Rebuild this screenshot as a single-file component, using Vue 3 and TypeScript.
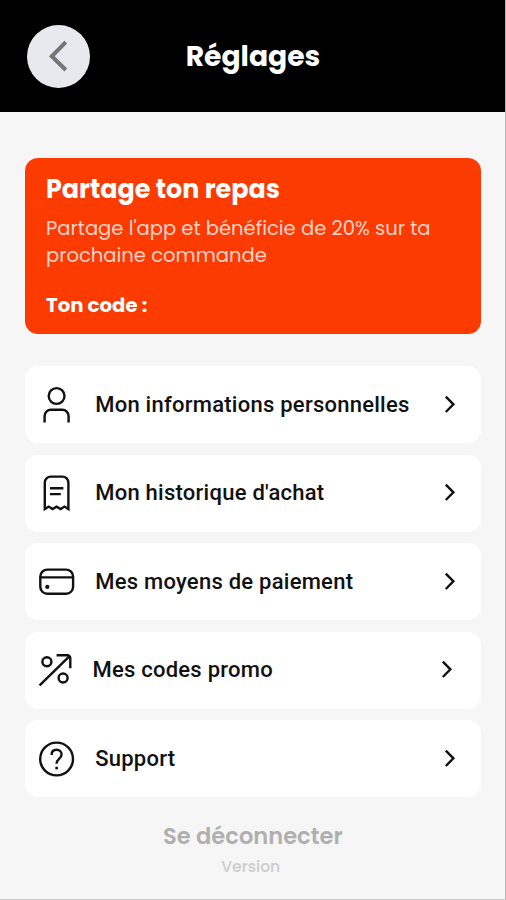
<script setup lang="ts">
type IconName = 'person' | 'receipt' | 'card' | 'promo' | 'help'

interface MenuItem {
  icon: IconName
  label: string
}

const items: MenuItem[] = [
  { icon: 'person', label: 'Mon informations personnelles' },
  { icon: 'receipt', label: "Mon historique d'achat" },
  { icon: 'card', label: 'Mes moyens de paiement' },
  { icon: 'promo', label: 'Mes codes promo' },
  { icon: 'help', label: 'Support' },
]
</script>

<template>
  <div class="screen">
    <header class="header">
      <button class="back" type="button" aria-label="Retour">
        <svg width="63" height="63" viewBox="0 0 63 63">
          <path d="M38.8 17.2 24.8 31.3 38.8 45" />
        </svg>
      </button>
      <h1 class="title">Réglages</h1>
    </header>

    <main class="content">
      <section class="share">
        <h2 class="share-title">Partage ton repas</h2>
        <p class="share-text">
          Partage l'app et bénéficie de 20% sur ta<br />
          prochaine commande
        </p>
        <p class="share-code">Ton code :</p>
      </section>

      <nav class="menu">
        <a v-for="item in items" :key="item.icon" class="item" :class="item.icon">
          <svg class="icon" width="40" height="40" viewBox="-0.6 0 40 40">
            <g v-if="item.icon === 'person'">
              <circle cx="20" cy="11" r="7.9" />
              <path d="M8 37.5V31a6.3 6.3 0 0 1 6.3-6.3h11.4A6.3 6.3 0 0 1 32 31v6.5" />
            </g>
            <g v-else-if="item.icon === 'receipt'">
              <path d="M8.2 36V9.6a6 6 0 0 1 6-6h11.6a6 6 0 0 1 6 6V36L27.9 33.6 24 36 20 33.6 16 36 12.1 33.6Z" />
              <path d="M13.4 15.3h13.4M13.4 21.1h10.8" />
            </g>
            <g v-else-if="item.icon === 'card'">
              <rect x="3.7" y="7.6" width="32.8" height="24.2" rx="7" />
              <path d="M3.7 15.4h32.8" />
              <circle class="dot" cx="10.7" cy="24.9" r="2.1" />
            </g>
            <g v-else-if="item.icon === 'promo'">
              <circle cx="11.3" cy="11.8" r="4.5" />
              <circle cx="27.5" cy="28" r="4.5" />
              <path d="M4 35.4 33.7 6.4M21 5.3H31.7a3 3 0 0 1 3 3V18.2" />
            </g>
            <g v-else>
              <circle cx="20" cy="20" r="16.4" />
              <path d="M15 15.9c0-3.3 2.1-5.2 5-5.2s5 2 5 4.7c0 4.3-5 4.2-5 9.3" />
              <circle class="dot" cx="20" cy="29" r="1.5" />
            </g>
          </svg>
          <span class="label">{{ item.label }}</span>
          <svg class="chevron" width="12" height="20" viewBox="0 0 12 20">
            <path d="M1.8 1.6 9.4 9.3 1.8 17" />
          </svg>
        </a>
      </nav>

      <footer class="footer">
        <button class="logout" type="button">Se déconnecter</button>
        <p class="version">Version</p>
      </footer>
    </main>
  </div>
</template>

<style>
body {
  margin: 0;
}
</style>

<style scoped>
.screen {
  box-sizing: border-box;
  width: 506px;
  height: 900px;
  overflow: hidden;
  background: #f6f6f6;
  border-right: 1px solid #b4b4b4;
  border-bottom: 1px solid #c8c8c8;
  font-family: Poppins, Inter, sans-serif;
}

.header {
  display: grid;
  grid-template-columns: 90px 1fr 90px;
  align-items: center;
  box-sizing: border-box;
  height: 112px;
  margin-right: -1px;
  background: #000;
}

.back {
  width: 63px;
  height: 63px;
  margin-left: 27px;
  padding: 0;
  border: 0;
  border-radius: 50%;
  background: #e8e9ee;
}

.back svg {
  display: block;
  fill: none;
  stroke: #757575;
  stroke-width: 4;
}

.title {
  margin: 0;
  color: #fff;
  font-size: 28.2px;
  font-weight: 700;
  line-height: 36px;
  text-align: center;
}

.content {
  padding: 45.5px 24.5px 0 25px;
}

.share {
  box-sizing: border-box;
  height: 176.5px;
  padding: 15.5px 21px 0;
  border-radius: 13px;
  background: #fb3b00;
  color: #fff;
  white-space: nowrap;
}

.share-title {
  margin: 0;
  font-size: 25.4px;
  font-weight: 700;
  line-height: 32px;
}

.share-text {
  margin: 10px 0 0;
  color: #ffd3cb;
  font-size: 19.55px;
  font-weight: 400;
  line-height: 27px;
}

.share-code {
  margin: 23px 0 0;
  font-size: 19.7px;
  font-weight: 700;
  line-height: 26px;
}

.menu {
  display: flex;
  flex-direction: column;
  gap: 11.5px;
  margin-top: 32px;
}

.item {
  display: flex;
  align-items: center;
  box-sizing: border-box;
  height: 77px;
  padding: 0 25px 0 11.2px;
  border-radius: 13px;
  background: #fff;
  color: #111;
}

.icon,
.chevron {
  flex: none;
  fill: none;
  stroke: #111;
  stroke-width: 2.4;
}

.icon .dot {
  fill: #111;
  stroke: none;
}

.label {
  flex: 1;
  margin-left: 19px;
  font-family: Roboto, sans-serif;
  font-size: 22px;
  font-weight: 500;
  letter-spacing: 0.25px;
  line-height: 28px;
  white-space: nowrap;
}

.promo {
  padding-right: 28px;
}

.promo .icon {
  margin-left: -0.8px;
}

.promo .label {
  margin-left: 17px;
}

.footer {
  display: flex;
  flex-direction: column;
  align-items: center;
  margin-top: 24px;
}

.logout {
  padding: 0;
  border: 0;
  background: none;
  color: #b0b0b0;
  font: 600 22.6px/30px Poppins, Inter, sans-serif;
}

.version {
  margin: 5px 4px 0 0;
  color: #cdcdcd;
  font-size: 15.6px;
  font-weight: 500;
  line-height: 22px;
}
</style>
